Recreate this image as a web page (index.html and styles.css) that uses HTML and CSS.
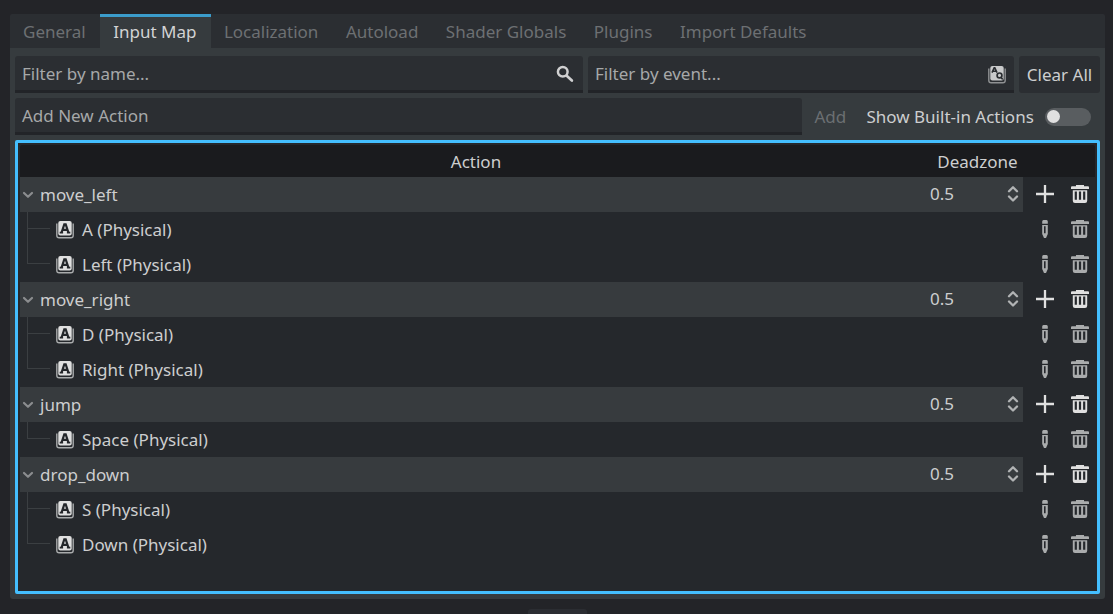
FILE: index.html
```
<!DOCTYPE html>
<html lang="en">
<head>
<meta charset="utf-8">
<title>Project Settings - Input Map</title>
<link rel="stylesheet" href="styles.css">
</head>
<body>
<svg class="defs" width="0" height="0">
  <symbol id="key" viewBox="0 0 18 18"><path fill="none" stroke="#a9abac" stroke-width="1.400" d="M.8 2.600v11.900q0 2.300 2.300 2.300h11.800q2.300 0 2.300-2.300V2.600"/><rect x="2.300" y="0" width="13.400" height="14.600" rx="2" fill="#e0e0e0"/><path fill="none" stroke="#24272b" stroke-width="2.200" d="M5.600 11.500 8.300 3.400h1.400l2.700 8.100M6.600 8.800h4.800"/><path fill="none" stroke="#24272b" stroke-width="1.700" d="M3.700 11.700h3.400M10.900 11.700h3.400"/></symbol>
  <symbol id="event" viewBox="0 0 18 18"><path fill="none" stroke="#8f9193" stroke-width="1.400" d="M.8 2.600v11.900q0 2.300 2.300 2.300h11.800q2.300 0 2.300-2.300V2.600"/><rect x="2.300" y="0" width="13.400" height="14.600" rx="2" fill="#c9cacb"/><path fill="none" stroke="#2b2e32" stroke-width="1.600" d="M4 6.700 6.200 1.800h.6L9 6.700M5 5.200h3.200M12.500 11l2.200 2.400"/><circle cx="11.500" cy="9.400" r="2.400" fill="none" stroke="#2b2e32" stroke-width="1.700"/></symbol>
  <symbol id="search" viewBox="0 0 16 16"><circle cx="6" cy="6" r="4.300" fill="none" stroke="#d0d0d1" stroke-width="2.200"/><path stroke="#d0d0d1" stroke-width="2.400" stroke-linecap="round" d="m9.500 9.500 4.600 4.300"/></symbol>
  <symbol id="plus" viewBox="0 0 18 18"><path stroke="currentColor" stroke-width="2.300" d="M9 0v18M0 9h18"/></symbol>
  <symbol id="trash" viewBox="0 0 18 18"><path fill="currentColor" fill-rule="evenodd" d="M5 0h8v1.300h4q1 0 1 1V4H0V2.300q0-1 1-1h4zM1.800 5.200h14.400v10.600q0 2.200-2.200 2.200H4q-2.200 0-2.200-2.200zM3.700 6.600v8.200h2.200V6.600zM7.900 6.600v8.200h2.200V6.600zM12.100 6.600v8.200h2.200V6.600z"/></symbol>
  <symbol id="pencil" viewBox="0 0 18 18"><path fill="currentColor" fill-rule="evenodd" d="M6.200 3.700V1.500Q6.200 0 7.500 0h3q1.300 0 1.300 1.500v2.200zM6.200 5h5.600v9L10 18H8l-1.800-4zM8 6.300v7h1.600v-7z"/></symbol>
  <symbol id="updown" viewBox="0 0 12 18"><path fill="none" stroke="currentColor" stroke-width="2.300" stroke-linecap="round" stroke-linejoin="round" d="m2 6.200 4-4 4 4M2 11.500l4 4 4-4"/></symbol>
  <symbol id="chevron" viewBox="0 0 12 8"><path fill="none" stroke="#8b8d8f" stroke-width="2.200" stroke-linecap="round" stroke-linejoin="round" d="m2 2 4 3.800L10 2"/></symbol>
</svg>

<main class="panel">
  <nav class="tabs">
    <span class="tab">General</span><span class="tab active">Input Map</span><span class="tab">Localization</span><span class="tab">Autoload</span><span class="tab">Shader Globals</span><span class="tab">Plugins</span><span class="tab">Import Defaults</span>
  </nav>
  <div class="content">
    <div class="filters">
      <div class="field by-name"><span>Filter by name...</span><svg class="icon"><use href="#search"/></svg></div>
      <div class="field by-event"><span>Filter by event...</span><svg class="icon"><use href="#event"/></svg></div>
      <div class="clear">Clear All</div>
    </div>
    <div class="new-action">
      <div class="field action-name"><span>Add New Action</span></div>
      <span class="add">Add</span>
      <span class="builtin">Show Built-in Actions</span>
      <span class="switch"><span class="knob"></span></span>
    </div>
    <section class="tree">
      <header class="head"><span class="col-action">Action</span><span class="col-zone">Deadzone</span><span class="col-tools"></span></header>

      <div class="row group"><div class="cells"><svg class="chevron"><use href="#chevron"/></svg><span class="name">move_left</span><span class="zone">0.5</span><svg class="updown"><use href="#updown"/></svg></div><svg class="tool"><use href="#plus"/></svg><svg class="tool"><use href="#trash"/></svg></div>
      <div class="row event"><span class="branch"></span><svg class="key"><use href="#key"/></svg><span class="name">A (Physical)</span><svg class="tool"><use href="#pencil"/></svg><svg class="tool"><use href="#trash"/></svg></div>
      <div class="row event last"><span class="branch"></span><svg class="key"><use href="#key"/></svg><span class="name">Left (Physical)</span><svg class="tool"><use href="#pencil"/></svg><svg class="tool"><use href="#trash"/></svg></div>

      <div class="row group"><div class="cells"><svg class="chevron"><use href="#chevron"/></svg><span class="name">move_right</span><span class="zone">0.5</span><svg class="updown"><use href="#updown"/></svg></div><svg class="tool"><use href="#plus"/></svg><svg class="tool"><use href="#trash"/></svg></div>
      <div class="row event"><span class="branch"></span><svg class="key"><use href="#key"/></svg><span class="name">D (Physical)</span><svg class="tool"><use href="#pencil"/></svg><svg class="tool"><use href="#trash"/></svg></div>
      <div class="row event last"><span class="branch"></span><svg class="key"><use href="#key"/></svg><span class="name">Right (Physical)</span><svg class="tool"><use href="#pencil"/></svg><svg class="tool"><use href="#trash"/></svg></div>

      <div class="row group"><div class="cells"><svg class="chevron"><use href="#chevron"/></svg><span class="name">jump</span><span class="zone">0.5</span><svg class="updown"><use href="#updown"/></svg></div><svg class="tool"><use href="#plus"/></svg><svg class="tool"><use href="#trash"/></svg></div>
      <div class="row event last"><span class="branch"></span><svg class="key"><use href="#key"/></svg><span class="name">Space (Physical)</span><svg class="tool"><use href="#pencil"/></svg><svg class="tool"><use href="#trash"/></svg></div>

      <div class="row group"><div class="cells"><svg class="chevron"><use href="#chevron"/></svg><span class="name">drop_down</span><span class="zone">0.5</span><svg class="updown"><use href="#updown"/></svg></div><svg class="tool"><use href="#plus"/></svg><svg class="tool"><use href="#trash"/></svg></div>
      <div class="row event"><span class="branch"></span><svg class="key"><use href="#key"/></svg><span class="name">S (Physical)</span><svg class="tool"><use href="#pencil"/></svg><svg class="tool"><use href="#trash"/></svg></div>
      <div class="row event last"><span class="branch"></span><svg class="key"><use href="#key"/></svg><span class="name">Down (Physical)</span><svg class="tool"><use href="#pencil"/></svg><svg class="tool"><use href="#trash"/></svg></div>
    </section>
  </div>
</main>
<div class="bottom-button"></div>
</body>
</html>
```
FILE: styles.css
```
* { box-sizing: border-box; }

body {
  margin: 0;
  height: 614px;
  padding: 14px 8px 0 10px;
  overflow: hidden;
  background: #232428;
  color: #cdcecf;
  font: 17px/24px "Noto Sans", sans-serif;
  white-space: nowrap;
}

svg { display: block; flex: none; }
.defs { position: absolute; }

.panel { height: 585px; display: flex; flex-direction: column; }

.tabs {
  display: flex;
  height: 34px;
  background: #2b2e32;
  border-radius: 2px 2px 0 0;
}
.tab { padding: 6px 14.500px 0 13px; color: #6d7073; }
.tab.active {
  padding-top: 3px;
  border-top: 3px solid #3b9ccb;
  background: #363b3e;
  color: #d2d3d4;
}

.content {
  flex: 1;
  padding: 8px 5px 5px;
  display: flex;
  flex-direction: column;
  gap: 5px;
  background: #363b3e;
  border-radius: 0 0 3px 3px;
}

.filters, .new-action { display: flex; height: 37px; flex: none; }
.filters { gap: 5px; }

.field {
  display: flex;
  justify-content: space-between;
  padding: 6px 9px 0 7px;
  background: #2b2e32;
  border-bottom: 3px solid #222428;
  border-radius: 3px 3px 0 0;
  color: #a6a8a9;
}
.by-name { width: 568px; }
.by-event { width: 426px; padding-right: 8px; }
.icon { width: 18px; height: 18px; margin-top: 3px; }
.by-event .icon { margin-top: 4px; }
.clear {
  flex: 1;
  padding-top: 7px;
  text-align: center;
  background: #2b2e32;
  border-radius: 3px;
}

.action-name { width: 787px; }
.add, .builtin { padding-top: 7px; }
.add { width: 52px; padding-left: 12.500px; color: #6b6f72; }
.builtin { width: 191px; padding-left: 12.500px; }
.switch {
  width: 46px;
  height: 18px;
  margin-top: 10px;
  padding: 2px;
  border-radius: 9px;
  background: #595d60;
}
.knob {
  display: block;
  width: 13px;
  height: 13px;
  border-radius: 50%;
  background: #e0e0e0;
}

.tree {
  flex: 1;
  padding: 2px;
  border: 3px solid #44bfff;
  border-radius: 2px;
  background: #25282c;
}
.head {
  display: flex;
  height: 32px;
  padding-top: 5px;
  text-align: center;
  background: #1a1b1e;
  border-radius: 2px 2px 0 0;
}
.col-action { width: 912px; }
.col-zone { width: 91px; }
.col-tools { flex: 1; }

.row { display: flex; height: 35px; }
.name { padding-top: 6px; flex: 1; }
.tool { width: 18px; height: 18px; margin: 8px 0 0 17px; color: #aaacad; }
.group .tool { color: #e0e0e0; }
.row .cells + .tool { margin-left: 13px; }
.row .tool:last-child { margin-right: 6px; }

.cells {
  display: flex;
  flex: 1;
  background: #373b3e;
}
.chevron { width: 12px; height: 8px; margin: 14px 6.500px 0 1.500px; }
.zone { width: 77px; padding-top: 5px; }
.updown { width: 12px; height: 18px; margin: 8px 4px 0 0; color: #b1b3b4; }

.branch {
  width: 23px;
  margin-left: 7px;
  margin-right: 6px;
  border-left: 1px solid #3b3f42;
  background: linear-gradient(#3b3f42, #3b3f42) 0 16px / 100% 1px no-repeat;
}
.last .branch { height: 17px; }
.key { width: 18px; height: 18px; margin: 9px 8px 0 0; }

.bottom-button {
  width: 59px;
  height: 6px;
  margin: 10px 0 0 518px;
  background: #2b2d32;
  border-radius: 3px 3px 0 0;
}
```
